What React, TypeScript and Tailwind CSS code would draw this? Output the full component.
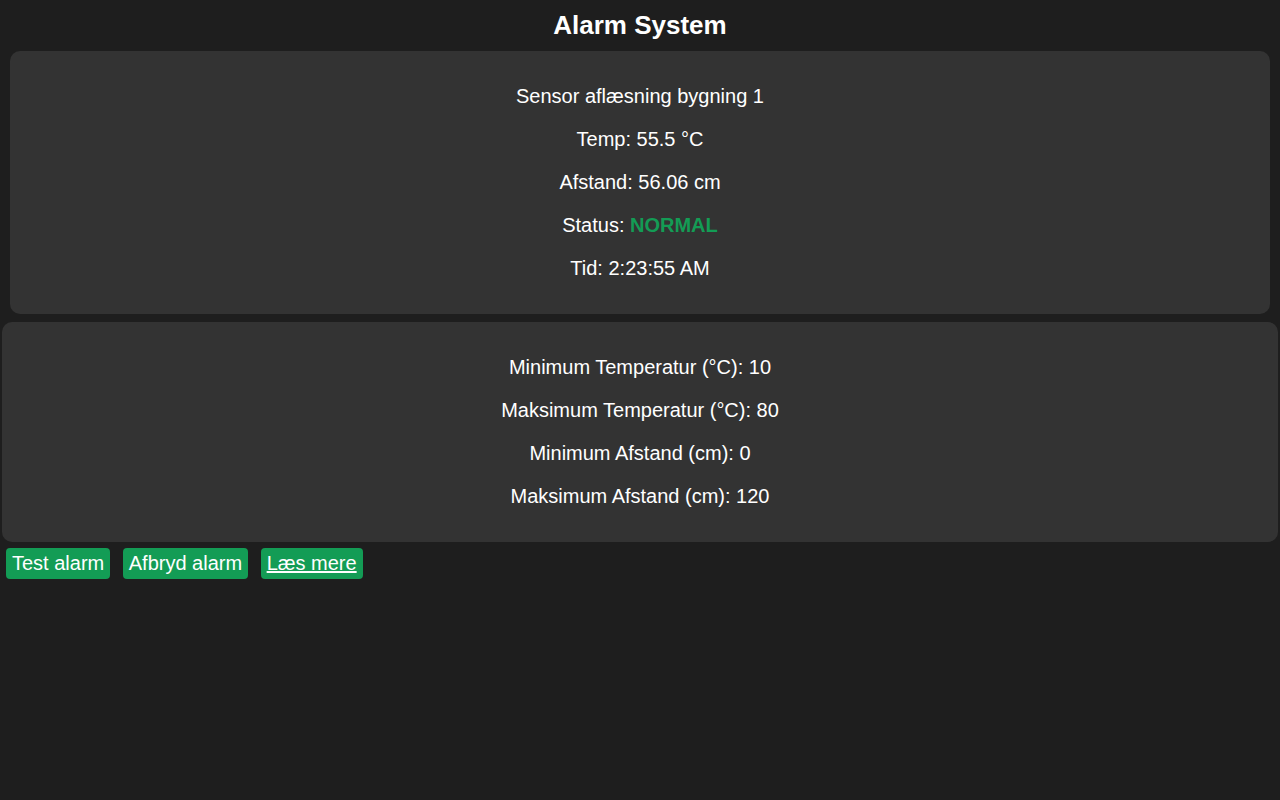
import React from "react";

export default function App() {
  const font = { fontFamily: '"Liberation Sans", Arial, sans-serif' };
  return (
    <div className="min-h-[800px] bg-[#1e1e1e] text-white" style={font}>
      <div className="h-[51px] pb-[2px] flex items-center justify-center">
        <h1 className="text-[26px] font-bold leading-[30px]">Alarm System</h1>
      </div>
      <div className="mx-[10px] rounded-[10px] bg-[#333333] py-[34px] text-center text-[20px] leading-[23px] flex flex-col gap-[20px]">
        <p>Sensor aflæsning bygning 1</p>
        <p>Temp: 55.5 °C</p>
        <p>Afstand: 56.06 cm</p>
        <p>
          Status: <span className="font-bold text-[#139c55]">NORMAL</span>
        </p>
        <p>Tid: 2:23:55 AM</p>
      </div>
      <div className="mx-[2px] mt-[8px] rounded-[10px] bg-[#333333] py-[34px] text-center text-[20px] leading-[23px] flex flex-col gap-[20px]">
        <p>Minimum Temperatur (°C): 10</p>
        <p>Maksimum Temperatur (°C): 80</p>
        <p>Minimum Afstand (cm): 0</p>
        <p>Maksimum Afstand (cm): 120</p>
      </div>
      <div className="mt-[6px] pl-[6px] flex gap-[12.5px] text-[20px] leading-[23px]">
        <button className="bg-[#139c55] rounded-[4px] px-[6px] py-[4px] text-white">Test alarm</button>
        <button className="bg-[#139c55] rounded-[4px] px-[6px] py-[4px] text-white">Afbryd alarm</button>
        <a href="#" className="bg-[#139c55] rounded-[4px] px-[6px] py-[4px] text-white underline">Læs mere</a>
      </div>
    </div>
  );
}
